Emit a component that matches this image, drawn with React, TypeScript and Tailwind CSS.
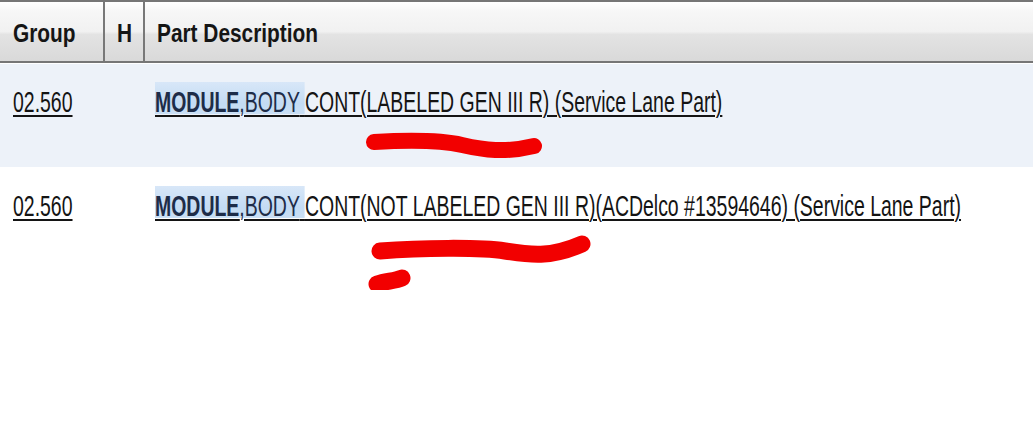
import * as React from "react";

const sans = "font-['Liberation_Sans',Arial,sans-serif]";

type Part = { group: string; rest: string };

const PARTS: Part[] = [
  { group: "02.560", rest: " CONT(LABELED GEN III R) (Service Lane Part)" },
  {
    group: "02.560",
    rest: " CONT(NOT LABELED GEN III R)(ACDelco #13594646) (Service Lane Part)",
  },
];

// the source UI renders in a condensed face, so squeeze the text horizontally
function HeaderCell(props: { label: string; className: string }) {
  return (
    <div className={`h-full shrink-0 pt-[19px] ${props.className}`}>
      <span className="inline-block origin-left scale-x-[0.834] whitespace-nowrap text-[25px] leading-[25px] font-bold text-[#151515]">
        {props.label}
      </span>
    </div>
  );
}

function Separator() {
  return <div className="h-full w-[2px] shrink-0 bg-[#787878]" />;
}

function PartRow(props: { part: Part; index: number }) {
  const { part, index } = props;
  const shaded = index === 0;
  return (
    <div
      className={`flex ${shaded ? "h-[103px] bg-[#edf2f9] pt-[24px]" : "h-[110px] bg-white pt-[25px]"}`}
    >
      <div className="w-[145px] shrink-0 pl-[13px]">
        <span className="inline-block origin-left scale-x-[0.671] whitespace-nowrap text-[29px] leading-[29px] text-[#141414] underline decoration-2 underline-offset-[3px]">
          {part.group}
        </span>
      </div>
      <div className="min-w-0 flex-1 pl-[10px]">
        <span className="inline-block origin-left scale-x-[0.671] whitespace-nowrap text-[29px] leading-[29px] text-[#141414] underline decoration-2 underline-offset-[3px]">
          <span className="bg-[linear-gradient(to_bottom,#d8e7f8_0%,#c3dbf3_60%,#c9dff5_88%,transparent_88%)] pt-[4px] text-[#1d2c48]">
            <span className="font-bold">MODULE</span>,BODY{" "}
          </span>
          {part.rest}
        </span>
      </div>
    </div>
  );
}

function Scribbles() {
  return (
    <svg
      className="pointer-events-none absolute top-0 left-0"
      width={1033}
      height={437}
      viewBox="0 0 1033 437"
    >
      <defs>
        <clipPath id="cut">
          <rect x="0" y="0" width="1033" height="290" />
        </clipPath>
      </defs>
      <g
        fill="none"
        stroke="#f20000"
        strokeLinecap="round"
        strokeLinejoin="round"
        clipPath="url(#cut)"
      >
        <path
          d="M374 142 C 410 140, 440 140, 462 145 S 505 153, 534 146"
          strokeWidth={16}
        />
        <path
          d="M380 251 C 420 248, 480 247, 505 251 S 550 258, 582 244"
          strokeWidth={17}
        />
        <path d="M377 284 C 386 281, 395 281, 402 278" strokeWidth={17} />
      </g>
    </svg>
  );
}

export default function App() {
  return (
    <div className={`relative h-[437px] w-[1033px] overflow-hidden bg-white ${sans}`}>
      <div className="h-[63px] border-t-2 border-b-2 border-[#767676] bg-[linear-gradient(to_bottom,#ffffff_0%,#f7f7f7_15%,#f1f1f1_50%,#e3e3e3_55%,#d9d9d9_100%)]">
        <div className="flex h-full">
          <HeaderCell label="Group" className="w-[103px] pl-[13px]" />
          <Separator />
          <HeaderCell label="H" className="w-[38px] pl-[12px]" />
          <Separator />
          <HeaderCell label="Part Description" className="flex-1 pl-[12px]" />
        </div>
      </div>
      <div className="h-px bg-white" />
      {PARTS.map((part, i) => (
        <PartRow key={i} part={part} index={i} />
      ))}
      <Scribbles />
    </div>
  );
}
